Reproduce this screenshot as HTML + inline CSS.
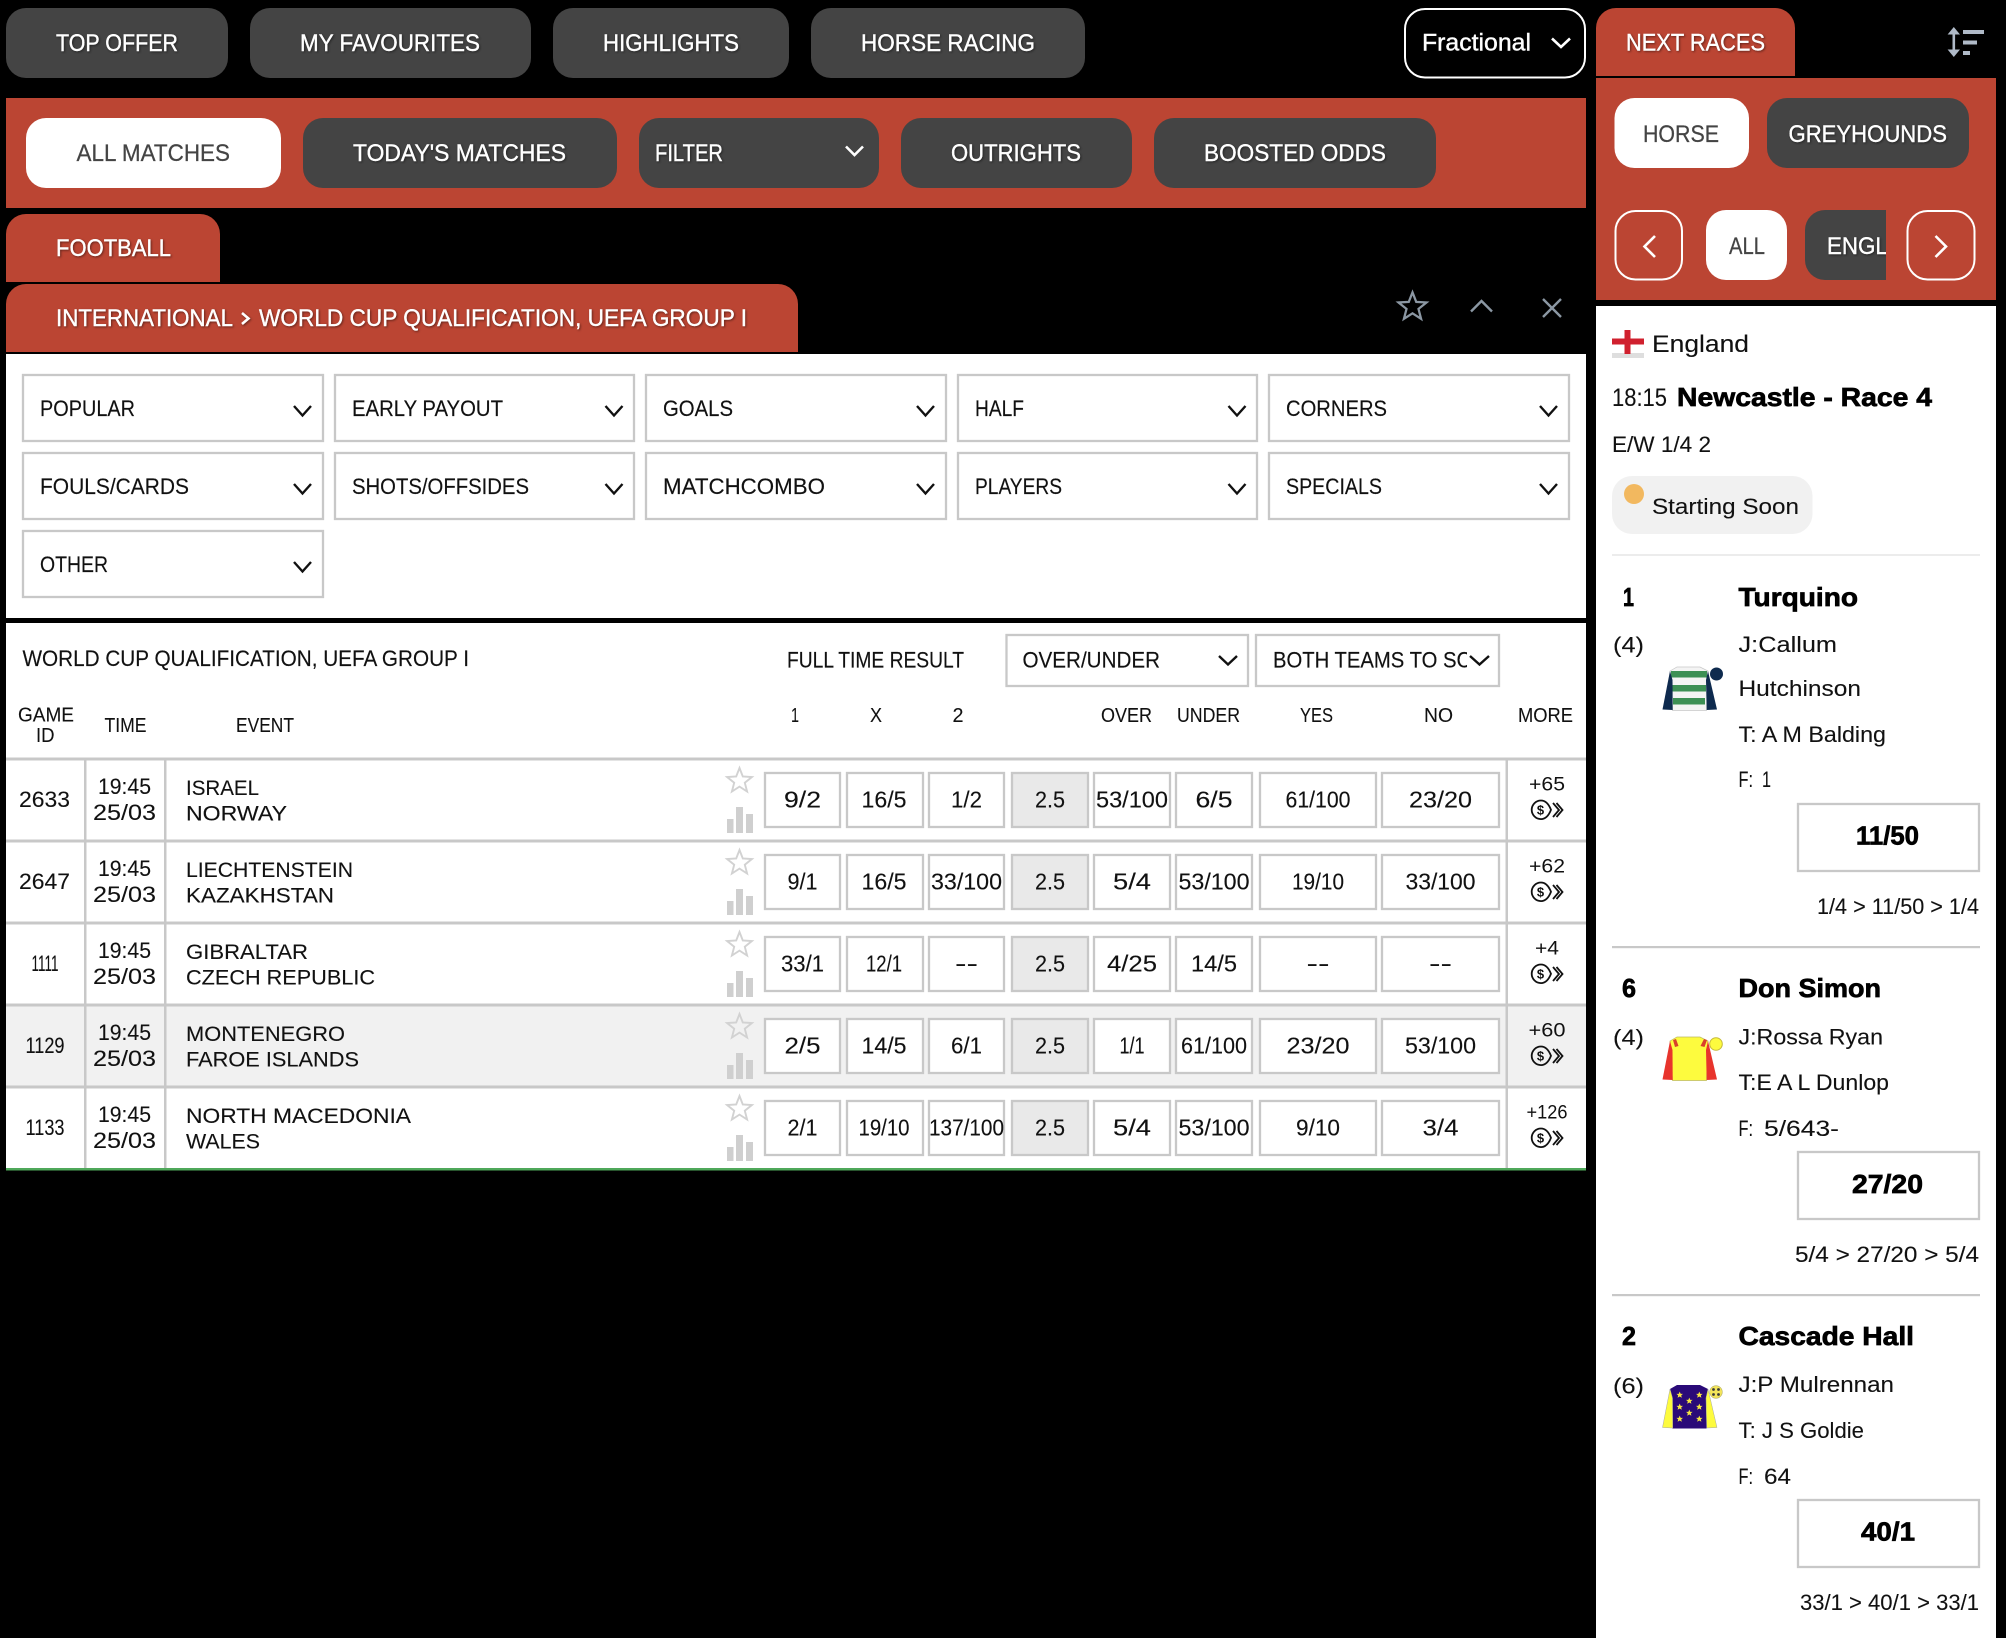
<!DOCTYPE html>
<html lang="en"><head><meta charset="utf-8"><title>Sportsbook</title>
<style>
html,body{margin:0;padding:0;background:#000;width:2006px;height:1638px;overflow:hidden}
svg{display:block}
text{font-family:"Liberation Sans",sans-serif;fill:#111}
.n{font-size:24.5px;fill:#fff;stroke:#fff;stroke-width:.4}
.sh{filter:drop-shadow(1px 1.5px 1px rgba(0,0,0,.45))}
.dk{fill:#444;stroke:#444;stroke-width:.25}
.f{font-size:22px;stroke:#111;stroke-width:.15}
.h{font-size:20px;stroke:#111;stroke-width:.1}
.o{font-size:23px;text-anchor:middle;stroke:#111;stroke-width:.12}
.m{font-size:19px;text-anchor:middle}
.id{font-size:22px;text-anchor:middle;stroke:#111;stroke-width:.1}
.ev{font-size:21px;stroke:#111;stroke-width:.12}
.p{font-size:22px;stroke:#111;stroke-width:.1}
.b{font-size:26px;font-weight:bold;stroke:#000;stroke-width:.7;fill:#000}
.c{fill:none;stroke:#111;stroke-width:2.4}
.w{fill:none;stroke:#fff;stroke-width:2.6}
.bx{fill:#fff;stroke:#c8c8c8;stroke-width:2.3}
.s{fill:#444}
.r{fill:#bb4533}
.g{fill:none;stroke:#8b97a3;stroke-width:2.4}
.d{font-size:13px;font-weight:bold;text-anchor:middle}
</style></head><body>
<svg xmlns="http://www.w3.org/2000/svg" width="2006" height="1638" viewBox="0 0 2006 1638">
<defs>
<clipPath id="ck"><rect x="1260" y="636" width="207" height="50"/></clipPath>
<clipPath id="eng"><rect x="1805" y="210" width="81" height="70"/></clipPath>
<polygon id="st" points="0,-13 3.3,-4.5 12.4,-4 5.3,1.7 7.6,10.5 0,5.6 -7.6,10.5 -5.3,1.7 -12.4,-4 -3.3,-4.500"/>
<polygon id="ys" points="0,-3.4 1,-1.1 3.3,-1.1 1.5,.4 2.1,2.8 0,1.5 -2.1,2.8 -1.5,.4 -3.3,-1.1 -1,-1.100" fill="#f5e642"/>
<g id="row">
<use href="#st" x="739.5" y="781" fill="none" stroke="#d2d2d2" stroke-width="1.9"/>
<rect x="727" y="819" width="6.5" height="14" fill="#cfcfcf"/><rect x="736" y="807" width="7" height="26" fill="#cfcfcf"/><rect x="746" y="814" width="7" height="19" fill="#cfcfcf"/>
<rect class="bx" x="765" y="773" width="75" height="54"/><rect class="bx" x="847" y="773" width="76" height="54"/><rect class="bx" x="929" y="773" width="75" height="54"/>
<rect x="1012" y="773" width="76" height="54" fill="#e9e9e9" stroke="#c8c8c8" stroke-width="2.3"/>
<rect class="bx" x="1094" y="773" width="76" height="54"/><rect class="bx" x="1176" y="773" width="76" height="54"/><rect class="bx" x="1260" y="773" width="116" height="54"/><rect class="bx" x="1382" y="773" width="117" height="54"/>
<path d="M1541 800.500a9.300 9.300 0 1 0 0 18.600c4 0 7.500-3 10-9.300-2.500-6.300-6-9.300-10-9.300z" fill="none" stroke="#111" stroke-width="1.8"/>
<path d="M1553 803l6 7-6 7M1556.500 803l6 7-6 7" fill="none" stroke="#111" stroke-width="1.8"/>
</g>
</defs>

<!-- top nav -->
<rect class="s" x="6" y="8" width="222" height="70" rx="20"/><rect class="s" x="250" y="8" width="281" height="70" rx="20"/><rect class="s" x="553" y="8" width="236" height="70" rx="20"/><rect class="s" x="811" y="8" width="274" height="70" rx="20"/>
<rect x="1405" y="9" width="180" height="68.500" rx="20" fill="#000" stroke="#fff" stroke-width="2"/>
<path class="r" d="M1596 76V28a20 20 0 0 1 20-20h159a20 20 0 0 1 20 20v48z"/>
<g class="sh">
<text class="n" x="56" y="51" textLength="122" lengthAdjust="spacingAndGlyphs">TOP OFFER</text>
<text class="n" x="300" y="51" textLength="180" lengthAdjust="spacingAndGlyphs">MY FAVOURITES</text>
<text class="n" x="603" y="51" textLength="136" lengthAdjust="spacingAndGlyphs">HIGHLIGHTS</text>
<text class="n" x="861" y="51" textLength="174" lengthAdjust="spacingAndGlyphs">HORSE RACING</text>
<text class="n" x="1626" y="50.500" textLength="139" lengthAdjust="spacingAndGlyphs">NEXT RACES</text>
</g>
<text class="n" x="1422" y="50.500" textLength="109" lengthAdjust="spacingAndGlyphs">Fractional</text>
<path class="w" d="M1552 38.500l9 8.500 9-8.500"/>
<g fill="#b0bac8"><rect x="1952.500" y="33" width="2.600" height="19"/><polygon points="1953.800,27 1960,34.500 1947.600,34.500"/><polygon points="1953.800,57 1960,49.500 1947.600,49.500"/><rect x="1963" y="30" width="21" height="4"/><rect x="1963" y="40.500" width="14" height="4"/><rect x="1963" y="51" width="7" height="4"/></g>

<!-- red bar -->
<rect class="r" x="6" y="98" width="1580" height="110"/>
<rect x="26" y="118" width="255" height="70" rx="20" fill="#fff"/>
<rect class="s" x="303" y="118" width="314" height="70" rx="20"/><rect class="s" x="639" y="118" width="240" height="70" rx="20"/><rect class="s" x="901" y="118" width="231" height="70" rx="20"/><rect class="s" x="1154" y="118" width="282" height="70" rx="20"/>
<text class="n dk" x="76.500" y="161" textLength="153.500" lengthAdjust="spacingAndGlyphs">ALL MATCHES</text>
<g class="sh">
<text class="n" x="353" y="161" textLength="213" lengthAdjust="spacingAndGlyphs">TODAY'S MATCHES</text>
<text class="n" x="655" y="161" textLength="68" lengthAdjust="spacingAndGlyphs">FILTER</text>
<text class="n" x="951" y="161" textLength="130" lengthAdjust="spacingAndGlyphs">OUTRIGHTS</text>
<text class="n" x="1204" y="161" textLength="182" lengthAdjust="spacingAndGlyphs">BOOSTED ODDS</text>
</g>
<path class="w" d="M846 146.500l8.500 8.500 8.500-8.500"/>

<!-- tabs -->
<path class="r" d="M6 282V234a20 20 0 0 1 20-20h174a20 20 0 0 1 20 20v48z"/>
<path class="r" d="M6 352V304a20 20 0 0 1 20-20h752a20 20 0 0 1 20 20v48z"/>
<g class="sh">
<text class="n" x="56" y="256" textLength="115" lengthAdjust="spacingAndGlyphs">FOOTBALL</text>
<text class="n" x="56" y="326" textLength="177" lengthAdjust="spacingAndGlyphs">INTERNATIONAL</text>
<path d="M242 313l6.500 5.500-6.500 5.500" fill="none" stroke="#fff" stroke-width="2.600"/>
<text class="n" x="259" y="326" textLength="488" lengthAdjust="spacingAndGlyphs">WORLD CUP QUALIFICATION, UEFA GROUP I</text>
</g>
<use href="#st" transform="translate(1412.500 307) scale(1.130)" fill="none" stroke="#8b97a3" stroke-width="2"/>
<path class="g" d="M1471 311.500l10.500-10.500 10.500 10.500M1543 299l18 18M1561 299l-18 18"/>

<!-- filter panel -->
<rect x="6" y="354" width="1580" height="264" fill="#fff"/>
<rect class="bx" x="23" y="375" width="300" height="66"/><rect class="bx" x="335" y="375" width="299" height="66"/><rect class="bx" x="646" y="375" width="300" height="66"/><rect class="bx" x="958" y="375" width="299" height="66"/><rect class="bx" x="1269" y="375" width="300" height="66"/>
<rect class="bx" x="23" y="453" width="300" height="66"/><rect class="bx" x="335" y="453" width="299" height="66"/><rect class="bx" x="646" y="453" width="300" height="66"/><rect class="bx" x="958" y="453" width="299" height="66"/><rect class="bx" x="1269" y="453" width="300" height="66"/>
<rect class="bx" x="23" y="531" width="300" height="66"/>
<text class="f" x="40" y="416" textLength="95" lengthAdjust="spacingAndGlyphs">POPULAR</text>
<text class="f" x="352" y="416" textLength="151" lengthAdjust="spacingAndGlyphs">EARLY PAYOUT</text>
<text class="f" x="663" y="416" textLength="70" lengthAdjust="spacingAndGlyphs">GOALS</text>
<text class="f" x="975" y="416" textLength="49" lengthAdjust="spacingAndGlyphs">HALF</text>
<text class="f" x="1286" y="416" textLength="101" lengthAdjust="spacingAndGlyphs">CORNERS</text>
<text class="f" x="40" y="494" textLength="149" lengthAdjust="spacingAndGlyphs">FOULS/CARDS</text>
<text class="f" x="352" y="494" textLength="177" lengthAdjust="spacingAndGlyphs">SHOTS/OFFSIDES</text>
<text class="f" x="663" y="494" textLength="162" lengthAdjust="spacingAndGlyphs">MATCHCOMBO</text>
<text class="f" x="975" y="494" textLength="87" lengthAdjust="spacingAndGlyphs">PLAYERS</text>
<text class="f" x="1286" y="494" textLength="96" lengthAdjust="spacingAndGlyphs">SPECIALS</text>
<text class="f" x="40" y="572" textLength="68" lengthAdjust="spacingAndGlyphs">OTHER</text>
<path class="c" d="M294 406l8.500 9.500 8.500-9.500M605.500 406l8.500 9.500 8.500-9.500M917 406l8.500 9.500 8.500-9.500M1228.500 406l8.500 9.500 8.500-9.500M1540 406l8.500 9.500 8.500-9.500M294 484l8.500 9.500 8.500-9.500M605.500 484l8.500 9.500 8.500-9.500M917 484l8.500 9.500 8.500-9.500M1228.500 484l8.500 9.500 8.500-9.500M1540 484l8.500 9.500 8.500-9.500M294 562l8.500 9.500 8.500-9.500"/>

<!-- table -->
<rect x="6" y="623" width="1580" height="545" fill="#fff"/>
<rect x="6" y="1005" width="1580" height="82" fill="#f1f1f1"/>
<rect x="6" y="1168" width="1580" height="2.500" fill="#4fa85a"/>
<g fill="#c8c8c8"><rect x="6" y="757.500" width="1580" height="3"/><rect x="6" y="839.500" width="1580" height="3"/><rect x="6" y="921.500" width="1580" height="3"/><rect x="6" y="1003.500" width="1580" height="3"/><rect x="6" y="1085.500" width="1580" height="3"/>
<rect x="84" y="759" width="2.500" height="409"/><rect x="164" y="759" width="2.500" height="409"/><rect x="1505.500" y="759" width="2.500" height="409"/></g>

<text class="f" x="22.500" y="666" textLength="446.500" lengthAdjust="spacingAndGlyphs">WORLD CUP QUALIFICATION, UEFA GROUP I</text>
<text class="f" x="787" y="667.500" textLength="177" lengthAdjust="spacingAndGlyphs">FULL TIME RESULT</text>
<rect class="bx" x="1006.500" y="635" width="241.500" height="51"/><rect class="bx" x="1256" y="635" width="243" height="51"/>
<text class="f" x="1022.500" y="667.500" textLength="137.500" lengthAdjust="spacingAndGlyphs">OVER/UNDER</text>
<g clip-path="url(#ck)"><text class="f" x="1273" y="667.500" textLength="242" lengthAdjust="spacingAndGlyphs">BOTH TEAMS TO SCORE</text></g>
<path class="c" d="M1219 656l9 8.500 9-8.500M1470 656l9.500 8.500 9.500-8.500"/>

<text class="h" x="18" y="721.500" textLength="56" lengthAdjust="spacingAndGlyphs">GAME</text>
<text class="h" x="36" y="742" textLength="18.500" lengthAdjust="spacingAndGlyphs">ID</text>
<text class="h" x="104.500" y="732" textLength="42" lengthAdjust="spacingAndGlyphs">TIME</text>
<text class="h" x="236" y="732" textLength="58" lengthAdjust="spacingAndGlyphs">EVENT</text>
<text class="h" x="791" y="722" textLength="8" lengthAdjust="spacingAndGlyphs">1</text>
<text class="h" x="870" y="722" textLength="12" lengthAdjust="spacingAndGlyphs">X</text>
<text class="h" x="952.500" y="722" textLength="11" lengthAdjust="spacingAndGlyphs">2</text>
<text class="h" x="1101" y="722" textLength="51" lengthAdjust="spacingAndGlyphs">OVER</text>
<text class="h" x="1177" y="722" textLength="63" lengthAdjust="spacingAndGlyphs">UNDER</text>
<text class="h" x="1300" y="722" textLength="33" lengthAdjust="spacingAndGlyphs">YES</text>
<text class="h" x="1424" y="722" textLength="29" lengthAdjust="spacingAndGlyphs">NO</text>
<text class="h" x="1518" y="722" textLength="55" lengthAdjust="spacingAndGlyphs">MORE</text>

<use href="#row"/><use href="#row" y="82"/><use href="#row" y="164"/><use href="#row" y="246"/><use href="#row" y="328"/>

<!-- row 1 -->
<g>
<text class="id" x="44.500" y="807" textLength="51" lengthAdjust="spacingAndGlyphs">2633</text>
<text class="id" x="124.500" y="794" textLength="53" lengthAdjust="spacingAndGlyphs">19:45</text><text class="id" x="124.500" y="820" textLength="63" lengthAdjust="spacingAndGlyphs">25/03</text>
<text class="ev" x="186" y="795" textLength="73" lengthAdjust="spacingAndGlyphs">ISRAEL</text><text class="ev" x="186" y="820.500" textLength="101" lengthAdjust="spacingAndGlyphs">NORWAY</text>
<text class="o" x="802.500" y="807.500" textLength="37" lengthAdjust="spacingAndGlyphs">9/2</text><text class="o" x="884" y="807.500" textLength="45" lengthAdjust="spacingAndGlyphs">16/5</text><text class="o" x="966.500" y="807.500" textLength="31" lengthAdjust="spacingAndGlyphs">1/2</text><text class="o" x="1050" y="807.500" textLength="30" lengthAdjust="spacingAndGlyphs">2.5</text><text class="o" x="1132" y="807.500" textLength="72" lengthAdjust="spacingAndGlyphs">53/100</text><text class="o" x="1214" y="807.500" textLength="37" lengthAdjust="spacingAndGlyphs">6/5</text><text class="o" x="1318" y="807.500" textLength="65" lengthAdjust="spacingAndGlyphs">61/100</text><text class="o" x="1440.500" y="807.500" textLength="63" lengthAdjust="spacingAndGlyphs">23/20</text>
<text class="m" x="1547" y="790.500" textLength="36" lengthAdjust="spacingAndGlyphs">+65</text><text class="d" x="1540.500" y="814.500">$</text>
</g>
<!-- row 2 -->
<g transform="translate(0 82)">
<text class="id" x="44.500" y="807" textLength="51" lengthAdjust="spacingAndGlyphs">2647</text>
<text class="id" x="124.500" y="794" textLength="53" lengthAdjust="spacingAndGlyphs">19:45</text><text class="id" x="124.500" y="820" textLength="63" lengthAdjust="spacingAndGlyphs">25/03</text>
<text class="ev" x="186" y="795" textLength="167" lengthAdjust="spacingAndGlyphs">LIECHTENSTEIN</text><text class="ev" x="186" y="820.500" textLength="148" lengthAdjust="spacingAndGlyphs">KAZAKHSTAN</text>
<text class="o" x="802.500" y="807.500" textLength="30" lengthAdjust="spacingAndGlyphs">9/1</text><text class="o" x="884" y="807.500" textLength="45" lengthAdjust="spacingAndGlyphs">16/5</text><text class="o" x="966.500" y="807.500" textLength="71" lengthAdjust="spacingAndGlyphs">33/100</text><text class="o" x="1050" y="807.500" textLength="30" lengthAdjust="spacingAndGlyphs">2.5</text><text class="o" x="1132" y="807.500" textLength="38" lengthAdjust="spacingAndGlyphs">5/4</text><text class="o" x="1214" y="807.500" textLength="71" lengthAdjust="spacingAndGlyphs">53/100</text><text class="o" x="1318" y="807.500" textLength="52" lengthAdjust="spacingAndGlyphs">19/10</text><text class="o" x="1440.500" y="807.500" textLength="70" lengthAdjust="spacingAndGlyphs">33/100</text>
<text class="m" x="1547" y="790.500" textLength="36" lengthAdjust="spacingAndGlyphs">+62</text><text class="d" x="1540.500" y="814.500">$</text>
</g>
<!-- row 3 -->
<g transform="translate(0 164)">
<text class="id" x="45" y="807" textLength="27" lengthAdjust="spacingAndGlyphs">1111</text>
<text class="id" x="124.500" y="794" textLength="53" lengthAdjust="spacingAndGlyphs">19:45</text><text class="id" x="124.500" y="820" textLength="63" lengthAdjust="spacingAndGlyphs">25/03</text>
<text class="ev" x="186" y="795" textLength="122" lengthAdjust="spacingAndGlyphs">GIBRALTAR</text><text class="ev" x="186" y="820.500" textLength="189" lengthAdjust="spacingAndGlyphs">CZECH REPUBLIC</text>
<text class="o" x="802.500" y="807.500" textLength="43" lengthAdjust="spacingAndGlyphs">33/1</text><text class="o" x="884" y="807.500" textLength="36" lengthAdjust="spacingAndGlyphs">12/1</text><text class="o" x="966.500" y="807.500" textLength="23" lengthAdjust="spacingAndGlyphs">--</text><text class="o" x="1050" y="807.500" textLength="30" lengthAdjust="spacingAndGlyphs">2.5</text><text class="o" x="1132" y="807.500" textLength="50" lengthAdjust="spacingAndGlyphs">4/25</text><text class="o" x="1214" y="807.500" textLength="46" lengthAdjust="spacingAndGlyphs">14/5</text><text class="o" x="1318" y="807.500" textLength="23" lengthAdjust="spacingAndGlyphs">--</text><text class="o" x="1440.500" y="807.500" textLength="23" lengthAdjust="spacingAndGlyphs">--</text>
<text class="m" x="1547" y="790.500" textLength="24" lengthAdjust="spacingAndGlyphs">+4</text><text class="d" x="1540.500" y="814.500">$</text>
</g>
<!-- row 4 -->
<g transform="translate(0 246)">
<text class="id" x="45" y="807" textLength="39" lengthAdjust="spacingAndGlyphs">1129</text>
<text class="id" x="124.500" y="794" textLength="53" lengthAdjust="spacingAndGlyphs">19:45</text><text class="id" x="124.500" y="820" textLength="63" lengthAdjust="spacingAndGlyphs">25/03</text>
<text class="ev" x="186" y="795" textLength="159" lengthAdjust="spacingAndGlyphs">MONTENEGRO</text><text class="ev" x="186" y="820.500" textLength="173" lengthAdjust="spacingAndGlyphs">FAROE ISLANDS</text>
<text class="o" x="802.500" y="807.500" textLength="36" lengthAdjust="spacingAndGlyphs">2/5</text><text class="o" x="884" y="807.500" textLength="45" lengthAdjust="spacingAndGlyphs">14/5</text><text class="o" x="966.500" y="807.500" textLength="31" lengthAdjust="spacingAndGlyphs">6/1</text><text class="o" x="1050" y="807.500" textLength="30" lengthAdjust="spacingAndGlyphs">2.5</text><text class="o" x="1132" y="807.500" textLength="25" lengthAdjust="spacingAndGlyphs">1/1</text><text class="o" x="1214" y="807.500" textLength="66" lengthAdjust="spacingAndGlyphs">61/100</text><text class="o" x="1318" y="807.500" textLength="63" lengthAdjust="spacingAndGlyphs">23/20</text><text class="o" x="1440.500" y="807.500" textLength="71" lengthAdjust="spacingAndGlyphs">53/100</text>
<text class="m" x="1547" y="790.500" textLength="37" lengthAdjust="spacingAndGlyphs">+60</text><text class="d" x="1540.500" y="814.500">$</text>
</g>
<!-- row 5 -->
<g transform="translate(0 328)">
<text class="id" x="45" y="807" textLength="39" lengthAdjust="spacingAndGlyphs">1133</text>
<text class="id" x="124.500" y="794" textLength="53" lengthAdjust="spacingAndGlyphs">19:45</text><text class="id" x="124.500" y="820" textLength="63" lengthAdjust="spacingAndGlyphs">25/03</text>
<text class="ev" x="186" y="795" textLength="225" lengthAdjust="spacingAndGlyphs">NORTH MACEDONIA</text><text class="ev" x="186" y="820.500" textLength="74" lengthAdjust="spacingAndGlyphs">WALES</text>
<text class="o" x="802.500" y="807.500" textLength="30" lengthAdjust="spacingAndGlyphs">2/1</text><text class="o" x="884" y="807.500" textLength="51" lengthAdjust="spacingAndGlyphs">19/10</text><text class="o" x="966.500" y="807.500" textLength="75" lengthAdjust="spacingAndGlyphs">137/100</text><text class="o" x="1050" y="807.500" textLength="30" lengthAdjust="spacingAndGlyphs">2.5</text><text class="o" x="1132" y="807.500" textLength="38" lengthAdjust="spacingAndGlyphs">5/4</text><text class="o" x="1214" y="807.500" textLength="71" lengthAdjust="spacingAndGlyphs">53/100</text><text class="o" x="1318" y="807.500" textLength="44" lengthAdjust="spacingAndGlyphs">9/10</text><text class="o" x="1440.500" y="807.500" textLength="36" lengthAdjust="spacingAndGlyphs">3/4</text>
<text class="m" x="1547" y="790.500" textLength="41" lengthAdjust="spacingAndGlyphs">+126</text><text class="d" x="1540.500" y="814.500">$</text>
</g>

<!-- next races panel -->
<rect class="r" x="1596" y="78" width="400" height="222"/>
<rect x="1614.500" y="98" width="134.500" height="70" rx="20" fill="#fff"/><rect class="s" x="1767" y="98" width="202" height="70" rx="20"/>
<text class="n dk" x="1643" y="142" textLength="76" lengthAdjust="spacingAndGlyphs">HORSE</text>
<g class="sh"><text class="n" x="1788.500" y="142" textLength="158.500" lengthAdjust="spacingAndGlyphs">GREYHOUNDS</text></g>
<rect x="1615.500" y="211" width="66.500" height="68.500" rx="20" fill="none" stroke="#fff" stroke-width="2"/>
<rect x="1907.500" y="211" width="67" height="68.500" rx="20" fill="none" stroke="#fff" stroke-width="2"/>
<rect x="1706" y="210" width="81" height="70" rx="20" fill="#fff"/>
<g clip-path="url(#eng)"><rect class="s" x="1805" y="210" width="120" height="70" rx="20"/></g>
<text class="n dk" x="1729" y="254" textLength="36" lengthAdjust="spacingAndGlyphs">ALL</text>
<g clip-path="url(#eng)" class="sh"><text class="n" x="1827" y="254" textLength="108" lengthAdjust="spacingAndGlyphs">ENGLAND</text></g>
<path class="w" d="M1655 236l-10.500 10.500 10.500 10.500M1935.500 236l10.500 10.500-10.500 10.500"/>

<rect x="1596" y="306" width="400" height="1332" fill="#fff"/>
<rect x="1612" y="330" width="32" height="28" fill="#fff"/><rect x="1612" y="353" width="32" height="5" fill="#dedede"/>
<rect x="1624.500" y="330" width="6" height="24" fill="#d0202e"/><rect x="1612" y="338.500" width="32" height="6" fill="#d0202e"/>
<text class="p" x="1652" y="352" textLength="97" lengthAdjust="spacingAndGlyphs" style="font-size:24px">England</text>
<text class="p" x="1612" y="406" textLength="55" lengthAdjust="spacingAndGlyphs" style="font-size:25px">18:15</text>
<text class="b" x="1677" y="406" textLength="255" lengthAdjust="spacingAndGlyphs">Newcastle - Race 4</text>
<text class="p" x="1612" y="452" textLength="99" lengthAdjust="spacingAndGlyphs">E/W 1/4 2</text>
<rect x="1612" y="476" width="200.500" height="58" rx="20" fill="#f1f1f1"/>
<circle cx="1634" cy="494" r="10" fill="#f2b85f"/>
<text class="p" x="1652" y="514" textLength="147" lengthAdjust="spacingAndGlyphs">Starting Soon</text>
<rect x="1612" y="554" width="368" height="2" fill="#ececec"/>

<!-- runner 1 -->
<text class="b" x="1623" y="606" textLength="11" lengthAdjust="spacingAndGlyphs">1</text>
<text class="b" x="1738.500" y="606" textLength="119.500" lengthAdjust="spacingAndGlyphs">Turquino</text>
<text class="p" x="1613" y="652.500" textLength="31" lengthAdjust="spacingAndGlyphs">(4)</text>
<text class="p" x="1738.500" y="652" textLength="98.500" lengthAdjust="spacingAndGlyphs">J:Callum</text>
<text class="p" x="1738.500" y="696" textLength="122.500" lengthAdjust="spacingAndGlyphs">Hutchinson</text>
<text class="p" x="1738.500" y="742" textLength="147.500" lengthAdjust="spacingAndGlyphs">T: A M Balding</text>
<text class="p" x="1738.500" y="787" textLength="14.500" lengthAdjust="spacingAndGlyphs">F:</text><text class="p" x="1762" y="787" textLength="9" lengthAdjust="spacingAndGlyphs">1</text>
<rect class="bx" x="1798" y="804" width="181" height="67"/>
<text class="b" x="1856" y="844.500" textLength="63" lengthAdjust="spacingAndGlyphs">11/50</text>
<text class="p" x="1817" y="914" textLength="162" lengthAdjust="spacingAndGlyphs">1/4 &gt; 11/50 &gt; 1/4</text>
<rect x="1612" y="946" width="368" height="2.200" fill="#c8c8c8"/>
<g transform="translate(1640 650)">
<polygon points="30,21 37,17 60,17 68,21 66.500,60.500 32.500,60.500" fill="#f4f4f4" stroke="#c8c8c8" stroke-width=".7"/>
<rect x="31" y="21" width="36" height="6.500" fill="#3d9055"/><rect x="32" y="35" width="34" height="6.500" fill="#3d9055"/><rect x="33" y="48" width="32" height="6.500" fill="#3d9055"/>
<polygon points="30,21 22.500,59.500 32.700,60 32.500,30" fill="#0e2a4e"/><polygon points="68,21 77,59.500 66.700,60 66,30" fill="#0e2a4e"/>
<circle cx="76.500" cy="24" r="6.500" fill="#0e2a4e"/>
</g>

<!-- runner 2 -->
<text class="b" x="1622" y="997" textLength="14" lengthAdjust="spacingAndGlyphs">6</text>
<text class="b" x="1738.500" y="997" textLength="142.500" lengthAdjust="spacingAndGlyphs">Don Simon</text>
<text class="p" x="1613" y="1045" textLength="31" lengthAdjust="spacingAndGlyphs">(4)</text>
<text class="p" x="1738.500" y="1044.500" textLength="144.500" lengthAdjust="spacingAndGlyphs">J:Rossa Ryan</text>
<text class="p" x="1738.500" y="1090" textLength="150.500" lengthAdjust="spacingAndGlyphs">T:E A L Dunlop</text>
<text class="p" x="1738.500" y="1136" textLength="14.500" lengthAdjust="spacingAndGlyphs">F:</text><text class="p" x="1764" y="1136" textLength="75" lengthAdjust="spacingAndGlyphs">5/643-</text>
<rect class="bx" x="1798" y="1152" width="181" height="67"/>
<text class="b" x="1852" y="1193" textLength="71" lengthAdjust="spacingAndGlyphs">27/20</text>
<text class="p" x="1795" y="1262" textLength="184" lengthAdjust="spacingAndGlyphs">5/4 &gt; 27/20 &gt; 5/4</text>
<rect x="1612" y="1294" width="368" height="2.200" fill="#c8c8c8"/>
<g transform="translate(1640 1020)">
<polygon points="30,21 37,17 60,17 68,21 66.500,60.500 32.500,60.500" fill="#fdfb3e" stroke="#bdbb60" stroke-width=".7"/>
<polygon points="30,21 22.500,59.500 32.700,60 32.500,30" fill="#e8342c"/><polygon points="68,21 77,59.500 66.700,60 66,30" fill="#e8342c"/>
<polygon points="33,20 36,19 38.500,26 35,27" fill="#d9402c"/><polygon points="64,19 67,20 64.500,27 60.500,26" fill="#d9402c"/>
<circle cx="76" cy="24" r="6.300" fill="#fdfb3e" stroke="#c5b93a"/>
</g>

<!-- runner 3 -->
<text class="b" x="1622" y="1345" textLength="14" lengthAdjust="spacingAndGlyphs">2</text>
<text class="b" x="1738.500" y="1345" textLength="175.500" lengthAdjust="spacingAndGlyphs">Cascade Hall</text>
<text class="p" x="1613" y="1393.500" textLength="31" lengthAdjust="spacingAndGlyphs">(6)</text>
<text class="p" x="1738.500" y="1392" textLength="155.500" lengthAdjust="spacingAndGlyphs">J:P Mulrennan</text>
<text class="p" x="1738.500" y="1438" textLength="125.500" lengthAdjust="spacingAndGlyphs">T: J S Goldie</text>
<text class="p" x="1738.500" y="1484" textLength="14.500" lengthAdjust="spacingAndGlyphs">F:</text><text class="p" x="1764" y="1484" textLength="27" lengthAdjust="spacingAndGlyphs">64</text>
<rect class="bx" x="1798" y="1500" width="181" height="67"/>
<text class="b" x="1861" y="1540.500" textLength="54" lengthAdjust="spacingAndGlyphs">40/1</text>
<text class="p" x="1800" y="1610" textLength="179" lengthAdjust="spacingAndGlyphs">33/1 &gt; 40/1 &gt; 33/1</text>
<g transform="translate(1640 1368)">
<polygon points="30,21 37,17 60,17 68,21 66.500,60.500 32.500,60.500" fill="#2a0a78"/>
<polygon points="30,21 22.500,59.500 32.700,60 32.500,30" fill="#fdfb3e" stroke="#a8a8a8" stroke-width=".5"/><polygon points="68,21 77,59.500 66.700,60 66,30" fill="#fdfb3e" stroke="#a8a8a8" stroke-width=".5"/>
<use href="#ys" x="39.700" y="27"/><use href="#ys" x="59.300" y="27"/><use href="#ys" x="49.300" y="33"/><use href="#ys" x="39.700" y="39"/><use href="#ys" x="59.300" y="39"/><use href="#ys" x="49.300" y="45"/><use href="#ys" x="39.700" y="51"/><use href="#ys" x="59.300" y="51"/>
<circle cx="76" cy="24" r="6.300" fill="#f3e45a" stroke="#b5b06a" stroke-width=".6"/>
<g fill="#3a3a3a"><circle cx="73.500" cy="21.500" r="1.400"/><circle cx="78.500" cy="21.500" r="1.400"/><circle cx="73.500" cy="26.500" r="1.400"/><circle cx="78.500" cy="26.500" r="1.400"/></g>
</g>
</svg>
</body></html>
